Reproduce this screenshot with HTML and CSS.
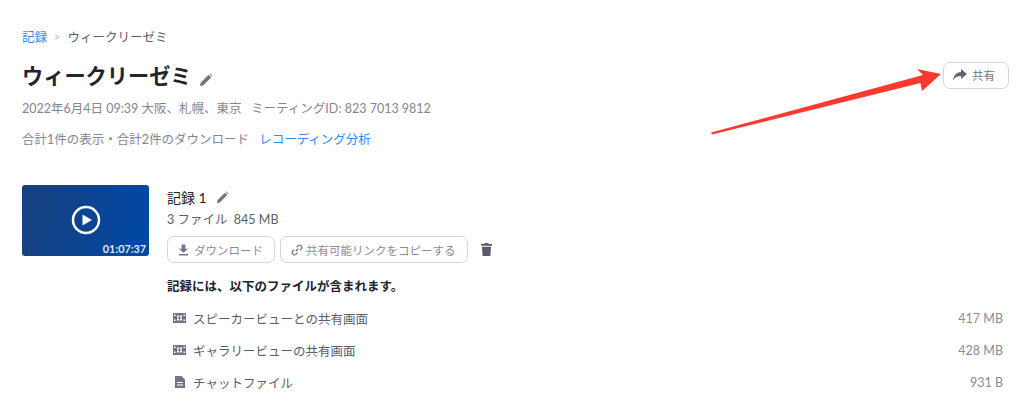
FILE: index.html
```html
<!DOCTYPE html>
<html lang="ja">

<head>
    <meta charset="UTF-8">
    <title>ウィークリーゼミ</title>
    <link rel="stylesheet" href="styles.css">
</head>

<body>
    <div class="page">
        <div class="breadcrumb">
            <a class="link">記録</a>
            <span class="sep">&gt;</span>
            <span>ウィークリーゼミ</span>
        </div>

        <div class="title-row">
            <div class="title">
                <h1>ウィークリーゼミ</h1>
                <svg class="pencil-big" viewBox="0 0 14 14"><path d="M1 13l.6-3.2L9.6 1.800l2.600 2.600-8 8z M10.400 1l.7-.6 2.500 2.500-.6.700z"/></svg>
            </div>
            <button class="btn share-btn">
                <svg class="share-icon" viewBox="0 0 14 12"><path d="M8 0l6 5-6 5V7C4.500 7 2 8 0 11.500 .5 6.500 3.500 3.500 8 3z"/></svg>
                共有
            </button>
        </div>

        <div class="meta">2022年6月4日 09:39 大阪、札幌、東京 &nbsp; ミーティングID: 823 7013 9812</div>
        <div class="summary">合計1件の表示・合計2件のダウンロード <a class="link summary-link">レコーディング分析</a></div>

        <div class="recording">
            <div class="thumb">
                <svg class="play" viewBox="0 0 30 30"><circle cx="15" cy="15" r="13" fill="none" stroke="#fff" stroke-width="2.500"/><path d="M11.500 9.500l9.500 5.500-9.500 5.500z" fill="#fff"/></svg>
                <span class="duration">01:07:37</span>
            </div>
            <div class="details">
                <div class="rec-name">記録 1
                    <svg class="pencil" viewBox="0 0 14 14"><path d="M1 13l.6-3.200L9.600 1.800l2.600 2.600-8 8z M10.400 1l.7-.6 2.500 2.500-.6.700z"/></svg>
                </div>
                <div class="rec-size">3 ファイル &nbsp;845 MB</div>
                <div class="actions">
                    <button class="btn">
                        <svg class="btn-icon" viewBox="0 0 12 12"><path d="M4 0h4v4.500h3L6 9 1 4.500h3z M1 10.300h10V12H1z"/></svg>
                        ダウンロード
                    </button>
                    <button class="btn link-btn">
                        <svg class="link-icon" viewBox="0 0 12 12"><path d="M4.800 7.200l2.400-2.400"/><path d="M5.600 3.200l1.300-1.300a2.200 2.200 0 0 1 3.200 3.200L8.800 6.400"/><path d="M3.200 5.600L1.900 6.900a2.200 2.200 0 0 0 3.200 3.200l1.300-1.300"/></svg>
                        共有可能リンクをコピーする
                    </button>
                    <svg class="trash" viewBox="0 0 12 14"><path d="M4 0h4l.5 1H12v2H0V1h3.500z M1 4h10l-.8 10H1.800z"/></svg>
                </div>
                <div class="includes">記録には、以下のファイルが含まれます。</div>
            </div>
        </div>

        <ul class="files">
            <li class="file">
                <span class="file-name">
                    <svg class="file-icon" viewBox="0 0 13 10"><path fill-rule="evenodd" d="M0 0h13v10H0z M1 1.500v1.500h1.500V1.500z M1 6.500V8h1.500V6.500z M10.500 1.500v1.500H12V1.500z M10.500 6.500V8H12V6.500z M4 2.500v2h2v-2z M7 2.500v2h2v-2z M4 5.500v2h2v-2z M7 5.500v2h2v-2z"/></svg>
                    スピーカービューとの共有画面
                </span>
                <span class="file-size">417 MB</span>
            </li>
            <li class="file">
                <span class="file-name">
                    <svg class="file-icon" viewBox="0 0 13 10"><path fill-rule="evenodd" d="M0 0h13v10H0z M1 1.500v1.500h1.500V1.500z M1 6.500V8h1.500V6.500z M10.500 1.500v1.500H12V1.500z M10.500 6.500V8H12V6.500z M4 2.500v2h2v-2z M7 2.500v2h2v-2z M4 5.500v2h2v-2z M7 5.500v2h2v-2z"/></svg>
                    ギャラリービューの共有画面
                </span>
                <span class="file-size">428 MB</span>
            </li>
            <li class="file">
                <span class="file-name">
                    <svg class="doc-icon" viewBox="0 0 10 12"><path fill-rule="evenodd" d="M0 0h6.500L10 3.500V12H0z M2 6v1h6V6z M2 8.500v1h6v-1z"/></svg>
                    チャットファイル
                </span>
                <span class="file-size">931 B</span>
            </li>
        </ul>
    </div>

    <svg class="arrow" viewBox="0 0 1024 406"><path d="M711 132.500L923 75 917 69 941 74 922 91 920.500 83 712 134.500z"/></svg>
</body>

</html>
```
FILE: styles.css
```css
* {
    box-sizing: border-box;
    font-family: Lato, "Noto Sans CJK JP", sans-serif;
}

html, body {
    margin: 0;
    height: 406px;
    overflow: hidden;
    background: #fff;
}

.page {
    padding: 28px 21px 0 22px;
    color: #85858f;
    font-size: 12.500px;
}

.link {
    color: #2d8cff;
}

.breadcrumb {
    display: flex;
    align-items: center;
    gap: 7px;
    height: 17px;
    color: #5c5c68;
    font-size: 12.500px;
}

.breadcrumb .sep {
    color: #bbbbc4;
    font-size: 11px;
}

.title-row {
    display: flex;
    justify-content: space-between;
    align-items: center;
    margin-top: 15px;
    height: 32px;
    margin-right: -6px;
}

.title {
    display: flex;
    align-items: center;
    gap: 7px;
}

h1 {
    margin: 0;
    font-size: 21.200px;
    line-height: 32px;
    font-weight: 700;
    color: #23232d;
}

.pencil-big {
    width: 14px;
    height: 14px;
    fill: #747487;
    margin-top: 7px;
}

.btn {
    display: flex;
    align-items: center;
    gap: 5px;
    height: 27px;
    padding: 0 11px 0 10px;
    border: 1px solid #d5d5de;
    border-radius: 7px;
    background: #fff;
    color: #8a8a98;
    font-size: 11.500px;
}

.link-btn {
    gap: 3px;
}

.share-btn {
    width: 66px;
    height: 27px;
    padding: 0 0 0 9px;
    margin-top: -2px;
    color: #747487;
}

.share-icon {
    width: 14px;
    height: 12px;
    fill: #5e6478;
}

.meta {
    margin-top: 8px;
    height: 18px;
    line-height: 18px;
}

.summary {
    margin-top: 13px;
    height: 18px;
    line-height: 18px;
}

.summary-link {
    margin-left: 7px;
}

.recording {
    display: flex;
    gap: 18px;
    margin-top: 36px;
}

.thumb {
    position: relative;
    display: flex;
    align-items: center;
    justify-content: center;
    width: 127px;
    height: 71px;
    border-radius: 3px;
    background: linear-gradient(100deg, #17407c, #0048a6);
}

.play {
    width: 30px;
    height: 30px;
    margin-top: -1px;
}

.duration {
    position: absolute;
    right: 3px;
    bottom: 1px;
    color: #dfe6f2;
    font-size: 10.800px;
    font-weight: 700;
}

.details {
    flex: 1;
}

.rec-name {
    display: flex;
    align-items: center;
    gap: 9px;
    height: 24px;
    color: #23232d;
    font-size: 14px;
}

.pencil {
    width: 13px;
    height: 13px;
    fill: #747487;
}

.rec-size {
    height: 20px;
    line-height: 22px;
    color: #5c5c68;
}

.actions {
    display: flex;
    align-items: center;
    gap: 5px;
    margin-top: 7px;
}

.btn-icon {
    width: 11px;
    height: 12px;
    fill: #747487;
}

.link-icon {
    width: 12px;
    height: 12px;
    fill: none;
    stroke: #747487;
    stroke-width: 1.300;
}

.trash {
    width: 11px;
    height: 13px;
    fill: #5b5b68;
    margin-left: 8px;
}

.includes {
    margin-top: 15px;
    height: 18px;
    line-height: 18px;
    color: #23232d;
    font-size: 12.500px;
    font-weight: 700;
}

.files {
    list-style: none;
    margin: 6px 0 0 0;
    padding: 0 0 0 151px;
}

.file {
    display: flex;
    justify-content: space-between;
    align-items: center;
    height: 32px;
}

.file-name {
    display: flex;
    align-items: center;
    gap: 7px;
    color: #5c5c68;
}

.file-icon {
    width: 13px;
    height: 10px;
    fill: #747487;
}

.doc-icon {
    width: 10px;
    height: 12px;
    margin: 0 1px 0 2px;
    fill: #747487;
}

.file-size {
    color: #8a8a98;
}

.arrow {
    position: absolute;
    left: 0;
    top: 0;
    width: 1024px;
    height: 406px;
    fill: #f93a2f;
    pointer-events: none;
}
```
